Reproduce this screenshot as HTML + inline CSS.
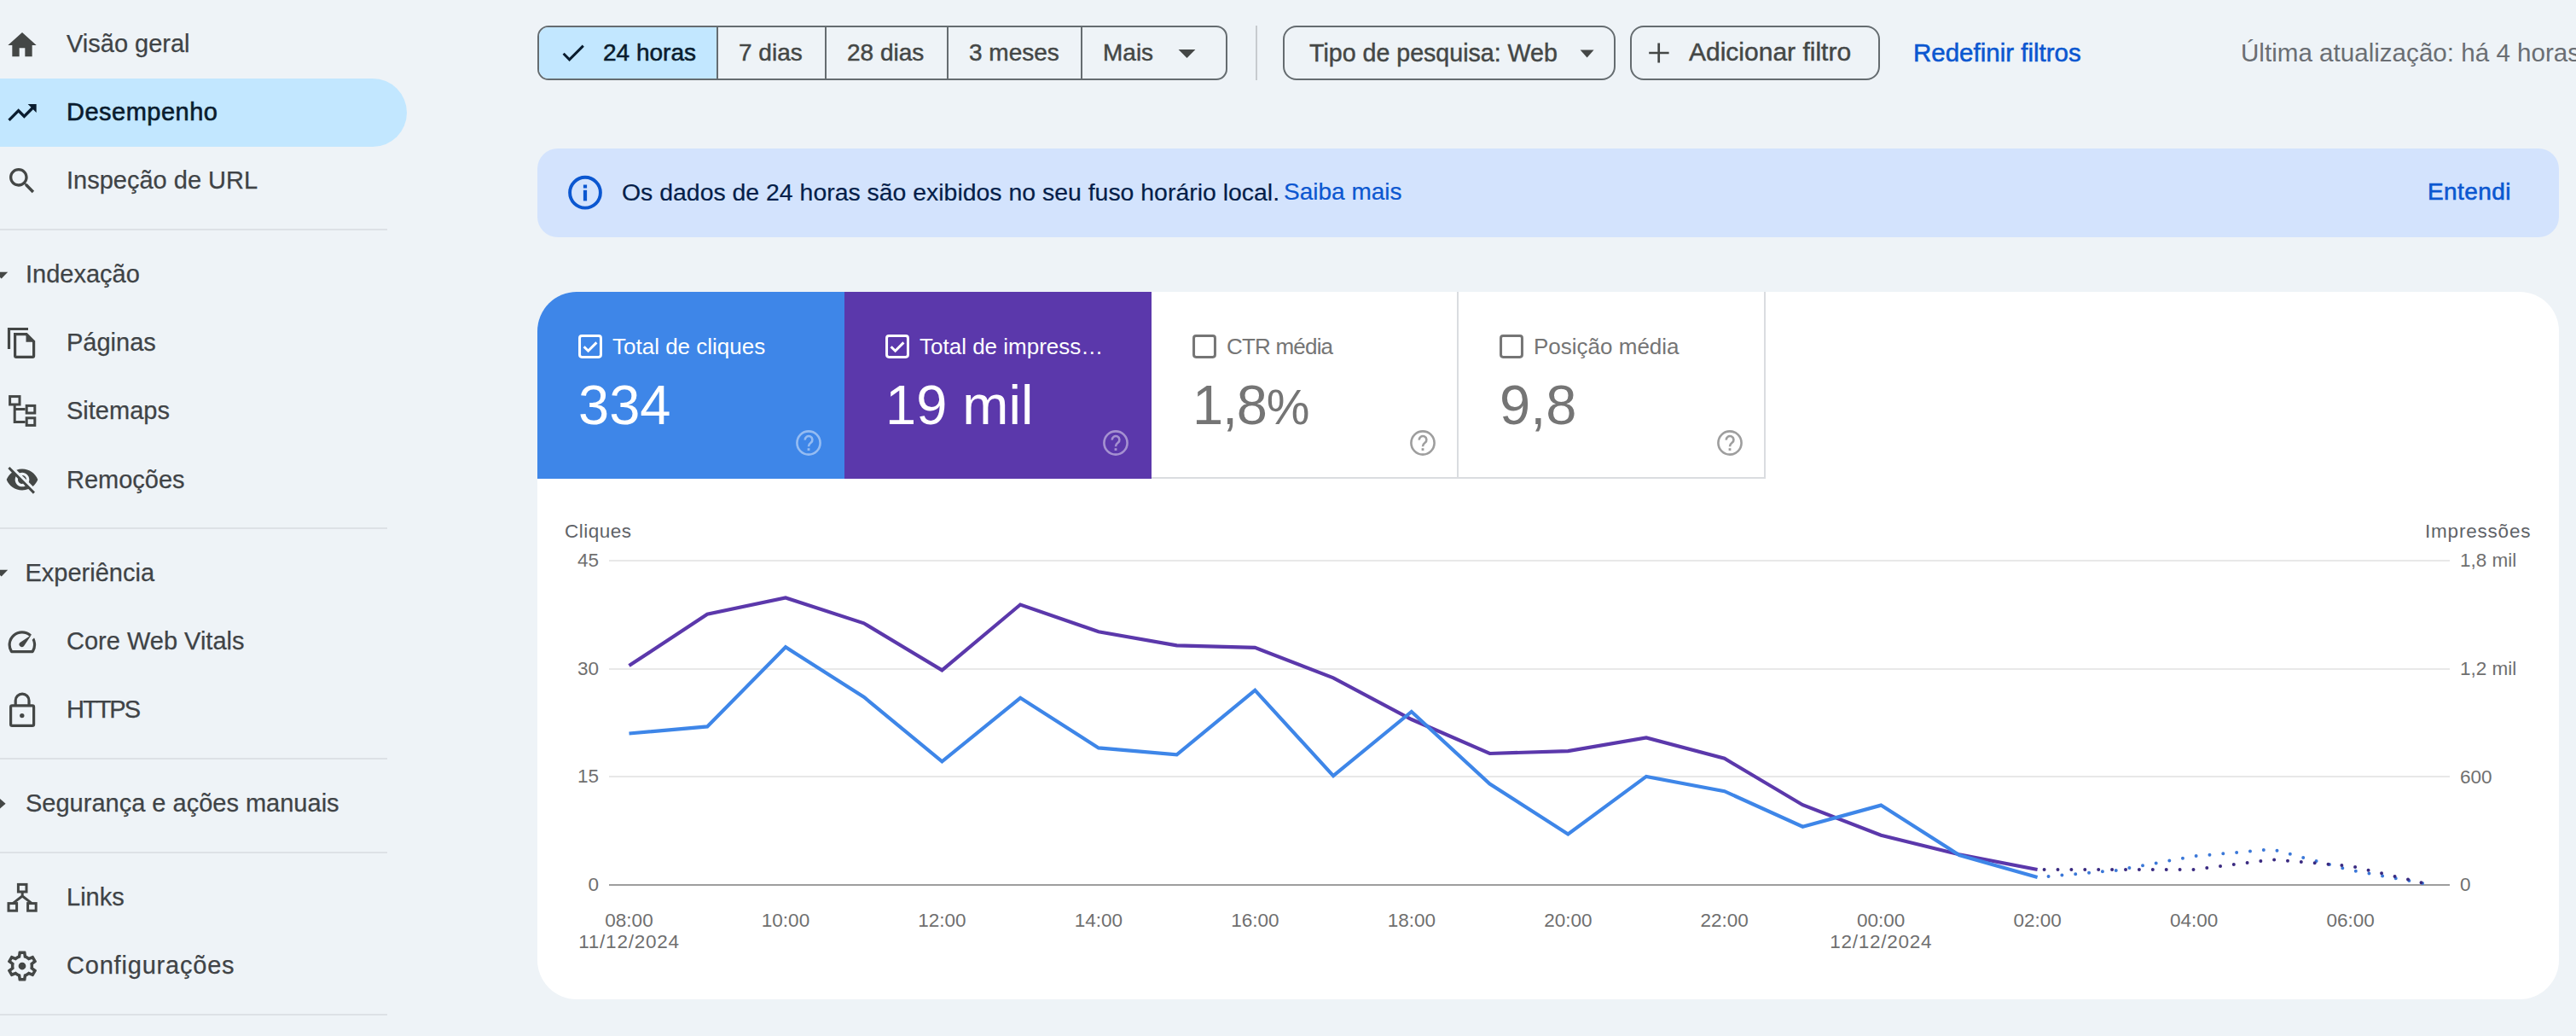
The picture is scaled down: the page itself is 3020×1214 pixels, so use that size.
<!DOCTYPE html>
<html><head><meta charset="utf-8"><title>Desempenho</title>
<style>
html,body{margin:0;padding:0;}
body{width:3020px;height:1214px;overflow:hidden;background:#eef3f7;position:relative;font-family:"Liberation Sans", sans-serif;}
.t{position:absolute;white-space:nowrap;}
</style></head><body>
<div style="position:absolute;left:0px;top:92px;width:477px;height:80px;background:#c2e7ff;border-radius:0 40px 40px 0;"></div>
<div class="t" style="left:78.0px;top:37.2px;font-size:29px;line-height:29px;color:#3f4346;-webkit-text-stroke:0.25px #3f4346;">Visão geral</div>
<div class="t" style="left:78.0px;top:116.8px;font-size:29px;line-height:29px;color:#0a1c2e;-webkit-text-stroke:0.6px #0a1c2e;letter-spacing:0.5px;">Desempenho</div>
<div class="t" style="left:78.0px;top:197.3px;font-size:29px;line-height:29px;color:#3f4346;-webkit-text-stroke:0.25px #3f4346;">Inspeção de URL</div>
<div class="t" style="left:30.0px;top:306.8px;font-size:29px;line-height:29px;color:#3f4346;-webkit-text-stroke:0.25px #3f4346;">Indexação</div>
<div class="t" style="left:78.0px;top:386.5px;font-size:29px;line-height:29px;color:#3f4346;-webkit-text-stroke:0.25px #3f4346;">Páginas</div>
<div class="t" style="left:78.0px;top:466.8px;font-size:29px;line-height:29px;color:#3f4346;-webkit-text-stroke:0.25px #3f4346;">Sitemaps</div>
<div class="t" style="left:78.0px;top:547.6px;font-size:29px;line-height:29px;color:#3f4346;-webkit-text-stroke:0.25px #3f4346;">Remoções</div>
<div class="t" style="left:29.5px;top:657.2px;font-size:29px;line-height:29px;color:#3f4346;-webkit-text-stroke:0.25px #3f4346;">Experiência</div>
<div class="t" style="left:78.0px;top:736.9px;font-size:29px;line-height:29px;color:#3f4346;-webkit-text-stroke:0.25px #3f4346;">Core Web Vitals</div>
<div class="t" style="left:78.0px;top:816.8px;font-size:29px;line-height:29px;color:#3f4346;-webkit-text-stroke:0.25px #3f4346;letter-spacing:-2px;">HTTPS</div>
<div class="t" style="left:30.0px;top:926.8px;font-size:29px;line-height:29px;color:#3f4346;-webkit-text-stroke:0.25px #3f4346;">Segurança e ações manuais</div>
<div class="t" style="left:78.0px;top:1037.0px;font-size:29px;line-height:29px;color:#3f4346;-webkit-text-stroke:0.25px #3f4346;">Links</div>
<div class="t" style="left:78.0px;top:1116.8px;font-size:29px;line-height:29px;color:#3f4346;-webkit-text-stroke:0.25px #3f4346;letter-spacing:0.8px;">Configurações</div>
<div style="position:absolute;left:0px;top:268px;width:454px;height:2px;background:#dde1e6;"></div>
<div style="position:absolute;left:0px;top:618px;width:454px;height:2px;background:#dde1e6;"></div>
<div style="position:absolute;left:0px;top:888px;width:454px;height:2px;background:#dde1e6;"></div>
<div style="position:absolute;left:0px;top:998px;width:454px;height:2px;background:#dde1e6;"></div>
<div style="position:absolute;left:0px;top:1188px;width:454px;height:2px;background:#dde1e6;"></div>
<svg style="position:absolute;left:6px;top:32.5px" width="40" height="40" viewBox="0 0 24 24"><path fill="#444746" d="M10 20v-6h4v6h5v-8h3L12 3 2 12h3v8z"/></svg>
<svg style="position:absolute;left:6px;top:112px" width="40" height="40" viewBox="0 0 24 24"><path fill="#0a1c2e" d="M16 6l2.29 2.29-4.88 4.88-4-4L2 16.59 3.41 18l6-6 4 4 6.3-6.29L22 12V6z"/></svg>
<svg style="position:absolute;left:6px;top:192px" width="40" height="40" viewBox="0 0 24 24"><path fill="#444746" d="M15.5 14h-.79l-.28-.27C15.41 12.59 16 11.11 16 9.5 16 5.91 13.09 3 9.5 3S3 5.91 3 9.5 5.91 16 9.5 16c1.61 0 3.09-.59 4.23-1.57l.27.28v.79l5 4.99L20.49 19l-4.99-5zm-6 0C7.01 14 5 11.99 5 9.5S7.01 5 9.5 5 14 7.01 14 9.5 11.99 14 9.5 14z"/></svg>
<svg style="position:absolute;left:0;top:370px" width="60" height="60" viewBox="0 0 60 60">
<path d="M10.5 39 V15.5 H33" fill="none" stroke="#444746" stroke-width="3.2"/>
<path d="M17.6 21.6 H31 L39.6 30.2 V47 a1.4 1.4 0 0 1 -1.4 1.4 H19 a1.4 1.4 0 0 1 -1.4 -1.4 Z" fill="none" stroke="#444746" stroke-width="3.2"/>
<path d="M30.5 20 L41.2 30.7 H30.5 Z" fill="#444746"/>
</svg>
<svg style="position:absolute;left:0;top:450px" width="60" height="60" viewBox="0 0 60 60">
<rect x="11.6" y="14.6" width="11.4" height="9.4" fill="none" stroke="#444746" stroke-width="3"/>
<path d="M17.2 24 V44.6 H29.6 M17.2 29.6 H29.6" fill="none" stroke="#444746" stroke-width="3"/>
<rect x="31.2" y="25.4" width="9.6" height="8.6" fill="none" stroke="#444746" stroke-width="3"/>
<rect x="31.2" y="39.8" width="9.6" height="8.6" fill="none" stroke="#444746" stroke-width="3"/>
</svg>
<svg style="position:absolute;left:6px;top:542px" width="40" height="40" viewBox="0 0 24 24"><path fill="#444746" d="M12 7c2.76 0 5 2.24 5 5 0 .65-.13 1.26-.36 1.83l2.92 2.92c1.51-1.26 2.7-2.89 3.43-4.75-1.73-4.39-6-7.5-11-7.5-1.4 0-2.74.25-3.98.7l2.16 2.16C10.74 7.13 11.35 7 12 7zM2 4.27l2.28 2.28.46.46C3.08 8.3 1.78 10.02 1 12c1.73 4.39 6 7.5 11 7.5 1.55 0 3.03-.3 4.38-.84l.42.42L19.73 22 21 20.73 3.27 3 2 4.27zM7.53 9.8l1.55 1.55c-.05.21-.08.43-.08.65 0 1.66 1.34 3 3 3 .22 0 .44-.03.65-.08l1.55 1.55c-.67.33-1.41.53-2.2.53-2.76 0-5-2.24-5-5 0-.79.2-1.53.53-2.2zm4.31-.78l3.15 3.15.02-.16c0-1.66-1.34-3-3-3l-.17.01z"/></svg>
<svg style="position:absolute;left:0;top:720px" width="60" height="60" viewBox="0 0 60 60">
<path d="M13.6 43.7 A14.7 14.7 0 1 1 38.1 43.7 Z" fill="none" stroke="#444746" stroke-width="3.2" stroke-linejoin="round"/>
<path d="M25.2 35.4 L41.5 18.8 L45 22.6 L28.6 38.8 Z" fill="#eef3f7"/>
<path d="M36.8 24 L27.9 37.2 A3.1 3.1 0 1 1 23.4 32.9 Z" fill="#444746"/>
</svg>
<svg style="position:absolute;left:0;top:800px" width="60" height="60" viewBox="0 0 60 60">
<rect x="12.6" y="26.9" width="27" height="23.4" rx="1.6" fill="none" stroke="#444746" stroke-width="3.2"/>
<path d="M18.2 27 V21 A7.9 7.9 0 0 1 34 21 V27" fill="none" stroke="#444746" stroke-width="3.2"/>
<circle cx="25.8" cy="38.6" r="2.7" fill="#444746"/>
</svg>
<svg style="position:absolute;left:0;top:1020px" width="60" height="60" viewBox="0 0 60 60">
<rect x="21.4" y="16.4" width="9.6" height="8.6" fill="none" stroke="#444746" stroke-width="3"/>
<rect x="10" y="38.6" width="9.6" height="8.6" fill="none" stroke="#444746" stroke-width="3"/>
<rect x="32.6" y="38.6" width="9.6" height="8.6" fill="none" stroke="#444746" stroke-width="3"/>
<path d="M26.2 25 V30 L15 38.6 M26.2 30 L37.4 38.6" fill="none" stroke="#444746" stroke-width="3"/>
</svg>
<svg style="position:absolute;left:5px;top:1111px" width="42" height="42" viewBox="0 0 24 24"><path fill="#444746" d="M19.43 12.98c.04-.32.07-.64.07-.98 0-.34-.03-.66-.07-.98l2.11-1.65c.19-.15.24-.42.12-.64l-2-3.46c-.09-.16-.26-.25-.44-.25-.06 0-.12.01-.17.03l-2.49 1c-.52-.4-1.08-.73-1.69-.98l-.38-2.65C14.46 2.18 14.25 2 14 2h-4c-.25 0-.46.18-.49.42l-.38 2.65c-.61.25-1.17.59-1.69.98l-2.49-1c-.06-.02-.12-.03-.18-.03-.17 0-.34.09-.43.25l-2 3.46c-.13.22-.07.49.12.64l2.11 1.65c-.04.32-.07.65-.07.98 0 .33.03.66.07.98l-2.11 1.65c-.19.15-.24.42-.12.64l2 3.46c.09.16.26.25.44.25.06 0 .12-.01.17-.03l2.49-1c.52.4 1.08.73 1.69.98l.38 2.65c.03.24.24.42.49.42h4c.25 0 .46-.18.49-.42l.38-2.65c.61-.25 1.17-.59 1.69-.98l2.49 1c.06.02.12.03.18.03.17 0 .34-.09.43-.25l2-3.46c.12-.22.07-.49-.12-.64l-2.11-1.65zm-1.98-1.71c.04.31.05.52.05.73 0 .21-.02.43-.05.73l-.14 1.13.89.7 1.08.84-.7 1.21-1.27-.51-1.04-.42-.9.68c-.43.32-.84.56-1.25.73l-1.06.43-.16 1.13-.2 1.35h-1.4l-.19-1.35-.16-1.13-1.06-.43c-.43-.18-.83-.41-1.23-.71l-.91-.7-1.06.43-1.27.51-.7-1.21 1.08-.84.89-.7-.14-1.13c-.03-.31-.05-.54-.05-.74s.02-.43.05-.73l.14-1.13-.89-.7-1.08-.84.7-1.21 1.27.51 1.04.42.9-.68c.43-.32.84-.56 1.25-.73l1.06-.43.16-1.13.2-1.35h1.39l.19 1.35.16 1.13 1.06.43c.43.18.83.41 1.23.71l.91.7 1.06-.43 1.27-.51.7 1.21-1.07.85-.89.7.14 1.13zM12 9.5a2.5 2.5 0 1 0 0 5a2.5 2.5 0 1 0 0 -5z"/></svg>
<svg style="position:absolute;left:0;top:310px" width="20" height="24" viewBox="0 0 20 24"><path d="M-7.6 8.8 H9.2 L1.7 16.4 Z" fill="#444746"/></svg>
<svg style="position:absolute;left:0;top:660px" width="20" height="24" viewBox="0 0 20 24"><path d="M-7.6 7.8 H9.2 L1.7 15.4 Z" fill="#444746"/></svg>
<svg style="position:absolute;left:0;top:930px" width="20" height="24" viewBox="0 0 20 24"><path d="M-2 4.4 L6.6 11.8 L-2 19.2 Z" fill="#444746"/></svg>
<div style="position:absolute;left:630px;top:30px;width:809px;height:64px;box-sizing:border-box;border:2px solid #656c70;border-radius:13px;overflow:hidden;"></div>
<div style="position:absolute;left:632px;top:32px;width:209px;height:60px;background:#c2e7ff;border-radius:11px 0 0 11px;"></div>
<div style="position:absolute;left:840px;top:30px;width:2px;height:64px;background:#656c70;"></div>
<div style="position:absolute;left:967px;top:30px;width:2px;height:64px;background:#656c70;"></div>
<div style="position:absolute;left:1110px;top:30px;width:2px;height:64px;background:#656c70;"></div>
<div style="position:absolute;left:1267px;top:30px;width:2px;height:64px;background:#656c70;"></div>
<svg style="position:absolute;left:652px;top:42px" width="40" height="40" viewBox="0 0 40 40"><path d="M8.6 20.8 L15.6 27.8 L31.8 11.6" fill="none" stroke="#0a1c2e" stroke-width="3"/></svg>
<div class="t" style="left:707.0px;top:47.5px;font-size:28px;line-height:28px;color:#0a1c2e;-webkit-text-stroke:0.55px #0a1c2e;">24 horas</div>
<div class="t" style="left:866.0px;top:47.5px;font-size:28px;line-height:28px;color:#444746;-webkit-text-stroke:0.45px #444746;">7 dias</div>
<div class="t" style="left:993.0px;top:47.5px;font-size:28px;line-height:28px;color:#444746;-webkit-text-stroke:0.45px #444746;">28 dias</div>
<div class="t" style="left:1136.0px;top:47.5px;font-size:28px;line-height:28px;color:#444746;-webkit-text-stroke:0.45px #444746;">3 meses</div>
<div class="t" style="left:1293.0px;top:47.5px;font-size:28px;line-height:28px;color:#444746;-webkit-text-stroke:0.45px #444746;">Mais</div>
<svg style="position:absolute;left:1380px;top:56px" width="24" height="14" viewBox="0 0 24 14"><path d="M1.6 2 H21.4 L11.5 12 Z" fill="#444746"/></svg>
<div style="position:absolute;left:1472px;top:30px;width:2px;height:64px;background:#c7cbcf;"></div>
<div style="position:absolute;left:1504px;top:30px;width:390px;height:64px;box-sizing:border-box;border:2px solid #656c70;border-radius:16px;"></div>
<div class="t" style="left:1535.0px;top:47.6px;font-size:28.6px;line-height:28.6px;color:#444746;-webkit-text-stroke:0.45px #444746;">Tipo de pesquisa: Web</div>
<svg style="position:absolute;left:1851px;top:56px" width="20" height="14" viewBox="0 0 20 14"><path d="M1.6 2.5 H17.6 L9.6 11.5 Z" fill="#444746"/></svg>
<div style="position:absolute;left:1911px;top:30px;width:293px;height:64px;box-sizing:border-box;border:2px solid #656c70;border-radius:16px;"></div>
<svg style="position:absolute;left:1930px;top:50px" width="30" height="30" viewBox="0 0 30 30"><path d="M14.7 0.6 V23.4 M3.2 12 H26.6" fill="none" stroke="#444746" stroke-width="2.7"/></svg>
<div class="t" style="left:1980.0px;top:45.8px;font-size:30px;line-height:30px;color:#444746;-webkit-text-stroke:0.45px #444746;">Adicionar filtro</div>
<div class="t" style="left:2243.0px;top:46.7px;font-size:29.5px;line-height:29.5px;color:#0b57d0;-webkit-text-stroke:0.55px #0b57d0;">Redefinir filtros</div>
<div class="t" style="left:2627.0px;top:46.8px;font-size:29.6px;line-height:29.6px;color:#6a6e73;">Última atualização: há 4 horas</div>
<div style="position:absolute;left:630px;top:174px;width:2370px;height:104px;background:#d3e3fd;border-radius:24px;"></div>
<svg style="position:absolute;left:662px;top:202px" width="48" height="48" viewBox="0 0 48 48"><circle cx="24" cy="23.7" r="17.9" fill="none" stroke="#0b57d0" stroke-width="3.9"/><rect x="21.9" y="14.5" width="4.2" height="4" fill="#0b57d0"/><rect x="21.9" y="20.8" width="4.2" height="12.6" fill="#0b57d0"/></svg>
<div class="t" style="left:729.0px;top:210.7px;font-size:28.43px;line-height:28.43px;color:#041e49;-webkit-text-stroke:0.2px #041e49;">Os dados de 24 horas são exibidos no seu fuso horário local.</div>
<div class="t" style="left:1505.0px;top:211.1px;font-size:28px;line-height:28px;color:#0b57d0;-webkit-text-stroke:0.2px #0b57d0;">Saiba mais</div>
<div class="t" style="left:2846.0px;top:211.3px;font-size:28px;line-height:28px;color:#0b57d0;-webkit-text-stroke:0.6px #0b57d0;letter-spacing:0.4px;">Entendi</div>
<div style="position:absolute;left:630px;top:342px;width:2370px;height:829px;background:#fff;border-radius:46px;"></div>
<div style="position:absolute;left:630px;top:342px;width:360px;height:219px;background:#3e86e8;border-top-left-radius:46px;"></div>
<div style="position:absolute;left:990px;top:342px;width:360px;height:219px;background:#5b38ab;"></div>
<div style="position:absolute;left:1350px;top:559px;width:720px;height:2px;background:#dadce0;"></div>
<div style="position:absolute;left:1708px;top:342px;width:2px;height:219px;background:#dadce0;"></div>
<div style="position:absolute;left:2068px;top:342px;width:2px;height:219px;background:#dadce0;"></div>
<svg style="position:absolute;left:676px;top:390px" width="32" height="32" viewBox="0 0 32 32"><rect x="3.55" y="3.55" width="24.9" height="24.9" rx="2.6" fill="none" stroke="#fff" stroke-width="3"/><path d="M8.6 16.2 L13.6 21.2 L23.4 11.4" fill="none" stroke="#fff" stroke-width="3"/></svg>
<div class="t" style="left:718.0px;top:393.3px;font-size:26px;line-height:26px;color:#fff;">Total de cliques</div>
<div class="t" style="left:678.0px;top:442.3px;font-size:65px;line-height:65px;color:#fff;">334</div>
<svg style="position:absolute;left:928px;top:499px" width="40" height="40" viewBox="0 0 40 40"><circle cx="20" cy="20" r="13.6" fill="none" stroke="rgba(255,255,255,0.45)" stroke-width="2.6"/><path d="M15.8 16.6 A4.3 4.3 0 1 1 22.6 19.8 C20.6 21.2 20 22 20 24.2" fill="none" stroke="rgba(255,255,255,0.45)" stroke-width="2.6"/><rect x="18.6" y="26.2" width="2.8" height="2.8" fill="rgba(255,255,255,0.45)"/></svg>
<svg style="position:absolute;left:1036px;top:390px" width="32" height="32" viewBox="0 0 32 32"><rect x="3.55" y="3.55" width="24.9" height="24.9" rx="2.6" fill="none" stroke="#fff" stroke-width="3"/><path d="M8.6 16.2 L13.6 21.2 L23.4 11.4" fill="none" stroke="#fff" stroke-width="3"/></svg>
<div class="t" style="left:1078.0px;top:393.3px;font-size:26px;line-height:26px;color:#fff;">Total de impress…</div>
<div class="t" style="left:1038.0px;top:442.3px;font-size:65px;line-height:65px;color:#fff;">19 mil</div>
<svg style="position:absolute;left:1288px;top:499px" width="40" height="40" viewBox="0 0 40 40"><circle cx="20" cy="20" r="13.6" fill="none" stroke="rgba(255,255,255,0.45)" stroke-width="2.6"/><path d="M15.8 16.6 A4.3 4.3 0 1 1 22.6 19.8 C20.6 21.2 20 22 20 24.2" fill="none" stroke="rgba(255,255,255,0.45)" stroke-width="2.6"/><rect x="18.6" y="26.2" width="2.8" height="2.8" fill="rgba(255,255,255,0.45)"/></svg>
<svg style="position:absolute;left:1396px;top:390px" width="32" height="32" viewBox="0 0 32 32"><rect x="3.55" y="3.55" width="24.9" height="24.9" rx="2.6" fill="none" stroke="#757575" stroke-width="3"/></svg>
<div class="t" style="left:1438.0px;top:393.3px;font-size:26px;line-height:26px;color:#757575;letter-spacing:-0.8px;">CTR média</div>
<div class="t" style="left:1398.0px;top:442.3px;font-size:65px;line-height:65px;color:#757575;letter-spacing:-1.2px;">1,8<span style="font-size:57px">%</span></div>
<svg style="position:absolute;left:1648px;top:499px" width="40" height="40" viewBox="0 0 40 40"><circle cx="20" cy="20" r="13.6" fill="none" stroke="#9e9e9e" stroke-width="2.6"/><path d="M15.8 16.6 A4.3 4.3 0 1 1 22.6 19.8 C20.6 21.2 20 22 20 24.2" fill="none" stroke="#9e9e9e" stroke-width="2.6"/><rect x="18.6" y="26.2" width="2.8" height="2.8" fill="#9e9e9e"/></svg>
<svg style="position:absolute;left:1756px;top:390px" width="32" height="32" viewBox="0 0 32 32"><rect x="3.55" y="3.55" width="24.9" height="24.9" rx="2.6" fill="none" stroke="#757575" stroke-width="3"/></svg>
<div class="t" style="left:1798.0px;top:393.3px;font-size:26px;line-height:26px;color:#757575;">Posição média</div>
<div class="t" style="left:1758.0px;top:442.3px;font-size:65px;line-height:65px;color:#757575;">9,8</div>
<svg style="position:absolute;left:2008px;top:499px" width="40" height="40" viewBox="0 0 40 40"><circle cx="20" cy="20" r="13.6" fill="none" stroke="#9e9e9e" stroke-width="2.6"/><path d="M15.8 16.6 A4.3 4.3 0 1 1 22.6 19.8 C20.6 21.2 20 22 20 24.2" fill="none" stroke="#9e9e9e" stroke-width="2.6"/><rect x="18.6" y="26.2" width="2.8" height="2.8" fill="#9e9e9e"/></svg>
<div class="t" style="left:662.0px;top:611.8px;font-size:22.5px;line-height:22.5px;color:#5f6368;letter-spacing:0.5px;">Cliques</div>
<div class="t" style="left:2843.0px;top:611.7px;font-size:22.5px;line-height:22.5px;color:#5f6368;letter-spacing:0.8px;">Impressões</div>
<div class="t" style="left:-298.0px;width:1000px;text-align:right;top:646.1px;font-size:22.5px;line-height:22.5px;color:#6f6f6f;">45</div>
<div class="t" style="left:2884.0px;top:646.4px;font-size:22.5px;line-height:22.5px;color:#6f6f6f;">1,8 mil</div>
<div class="t" style="left:-298.0px;width:1000px;text-align:right;top:772.7px;font-size:22.5px;line-height:22.5px;color:#6f6f6f;">30</div>
<div class="t" style="left:2884.0px;top:773.0px;font-size:22.5px;line-height:22.5px;color:#6f6f6f;">1,2 mil</div>
<div class="t" style="left:-298.0px;width:1000px;text-align:right;top:899.3px;font-size:22.5px;line-height:22.5px;color:#6f6f6f;">15</div>
<div class="t" style="left:2884.0px;top:899.6px;font-size:22.5px;line-height:22.5px;color:#6f6f6f;">600</div>
<div class="t" style="left:-298.0px;width:1000px;text-align:right;top:1025.7px;font-size:22.5px;line-height:22.5px;color:#6f6f6f;">0</div>
<div class="t" style="left:2884.0px;top:1026.0px;font-size:22.5px;line-height:22.5px;color:#6f6f6f;">0</div>
<div style="position:absolute;left:714px;top:656px;width:2158px;height:2px;background:#e8e8e8;"></div>
<div style="position:absolute;left:714px;top:782.6px;width:2158px;height:2px;background:#e8e8e8;"></div>
<div style="position:absolute;left:714px;top:909.2px;width:2158px;height:2px;background:#e8e8e8;"></div>
<div style="position:absolute;left:714px;top:1035.6px;width:2158px;height:2px;background:#9e9e9e;"></div>
<div class="t" style="left:237.5px;width:1000px;text-align:center;top:1067.9px;font-size:22.5px;line-height:22.5px;color:#6f6f6f;">08:00</div>
<div class="t" style="left:237.5px;width:1000px;text-align:center;top:1092.7px;font-size:22.5px;line-height:22.5px;color:#6f6f6f;letter-spacing:0.75px;">11/12/2024</div>
<div class="t" style="left:421.0px;width:1000px;text-align:center;top:1067.9px;font-size:22.5px;line-height:22.5px;color:#6f6f6f;">10:00</div>
<div class="t" style="left:604.4px;width:1000px;text-align:center;top:1067.9px;font-size:22.5px;line-height:22.5px;color:#6f6f6f;">12:00</div>
<div class="t" style="left:787.9px;width:1000px;text-align:center;top:1067.9px;font-size:22.5px;line-height:22.5px;color:#6f6f6f;">14:00</div>
<div class="t" style="left:971.3px;width:1000px;text-align:center;top:1067.9px;font-size:22.5px;line-height:22.5px;color:#6f6f6f;">16:00</div>
<div class="t" style="left:1154.8px;width:1000px;text-align:center;top:1067.9px;font-size:22.5px;line-height:22.5px;color:#6f6f6f;">18:00</div>
<div class="t" style="left:1338.3px;width:1000px;text-align:center;top:1067.9px;font-size:22.5px;line-height:22.5px;color:#6f6f6f;">20:00</div>
<div class="t" style="left:1521.7px;width:1000px;text-align:center;top:1067.9px;font-size:22.5px;line-height:22.5px;color:#6f6f6f;">22:00</div>
<div class="t" style="left:1705.2px;width:1000px;text-align:center;top:1067.9px;font-size:22.5px;line-height:22.5px;color:#6f6f6f;">00:00</div>
<div class="t" style="left:1705.2px;width:1000px;text-align:center;top:1092.7px;font-size:22.5px;line-height:22.5px;color:#6f6f6f;letter-spacing:0.75px;">12/12/2024</div>
<div class="t" style="left:1888.6px;width:1000px;text-align:center;top:1067.9px;font-size:22.5px;line-height:22.5px;color:#6f6f6f;">02:00</div>
<div class="t" style="left:2072.1px;width:1000px;text-align:center;top:1067.9px;font-size:22.5px;line-height:22.5px;color:#6f6f6f;">04:00</div>
<div class="t" style="left:2255.6px;width:1000px;text-align:center;top:1067.9px;font-size:22.5px;line-height:22.5px;color:#6f6f6f;">06:00</div>
<svg style="position:absolute;left:0;top:0" width="3020" height="1214"><polyline points="2388.6,1028.1 2480.4,1020.0 2572.1,1003.3 2663.8,995.2 2755.6,1019.6 2847.3,1036.2" fill="none" stroke="#3b78d8" stroke-width="4" stroke-linecap="round" stroke-dasharray="0 15.9" stroke-dashoffset="2.9"/><polyline points="2388.6,1019.0 2480.4,1019.0 2572.1,1019.0 2663.8,1007.2 2755.6,1014.8 2847.3,1036.2" fill="none" stroke="#3a2a80" stroke-width="4" stroke-linecap="round" stroke-dasharray="0 15.9" stroke-dashoffset="7.9"/><polyline points="737.5,780.1 829.2,719.8 921.0,700.4 1012.7,730.3 1104.4,785.4 1196.2,708.5 1287.9,740.2 1379.6,756.4 1471.3,758.9 1563.1,794.3 1654.8,843.0 1746.5,883.0 1838.3,880.1 1930.0,864.4 2021.7,888.8 2113.4,943.2 2205.2,978.8 2296.9,1001.3 2388.6,1019.0" fill="none" stroke="#5b38ab" stroke-width="4.2" stroke-linejoin="miter"/><polyline points="737.5,859.5 829.2,851.4 921.0,758.3 1012.7,816.7 1104.4,892.4 1196.2,817.8 1287.9,876.4 1379.6,884.3 1471.3,808.8 1563.1,909.2 1654.8,834.0 1746.5,918.6 1838.3,977.5 1930.0,909.9 2021.7,927.2 2113.4,968.7 2205.2,943.6 2296.9,1002.0 2388.6,1028.1" fill="none" stroke="#3e86e8" stroke-width="4.2" stroke-linejoin="miter"/></svg>
</body></html>
